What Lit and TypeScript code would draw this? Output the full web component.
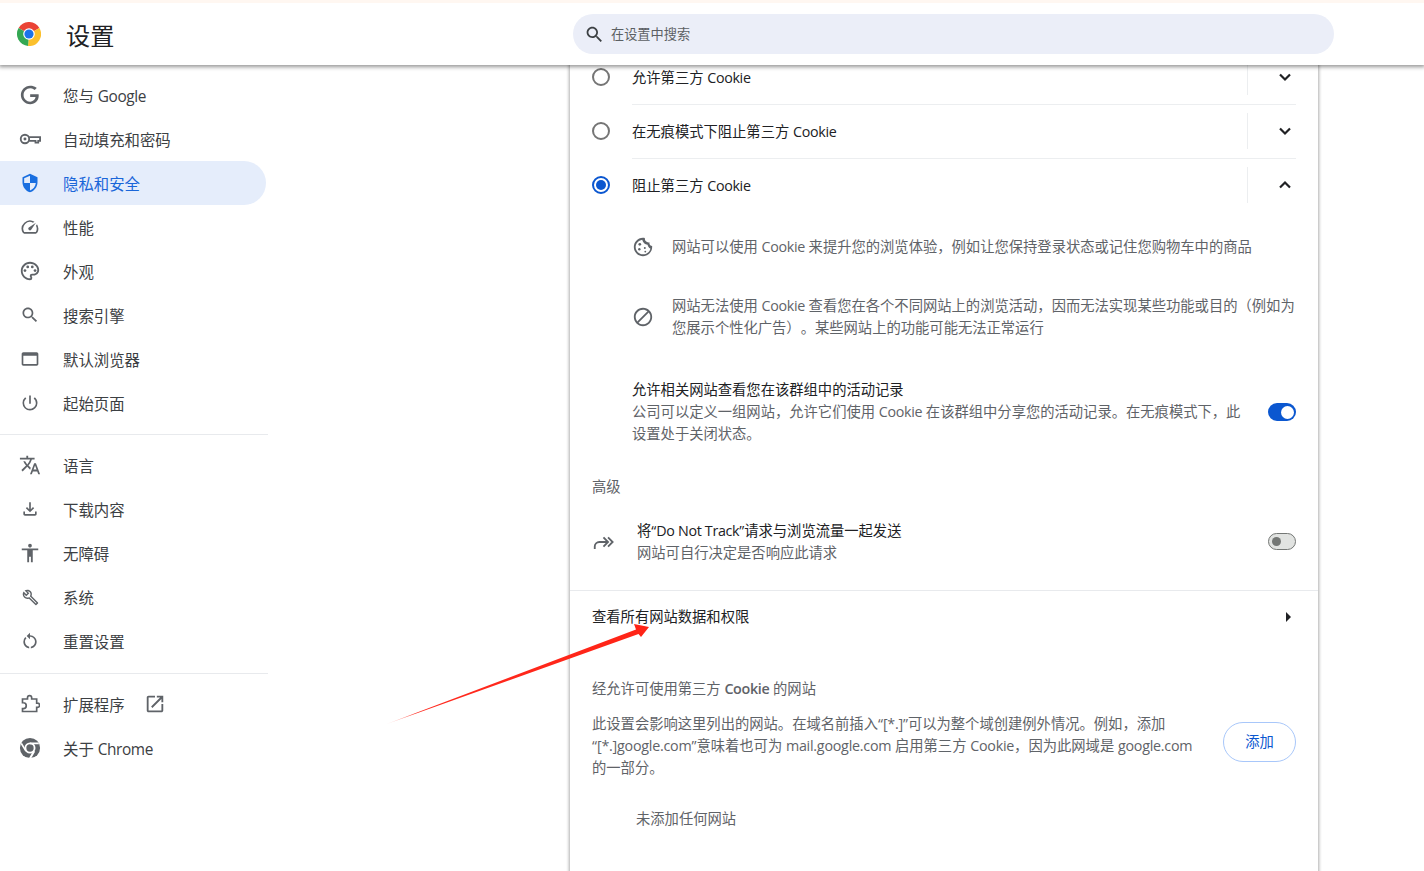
import { LitElement, html, css, svg } from "lit";
import { customElement } from "lit/decorators.js";

const P = (d: string) => svg`<path d=${d}></path>`;
const icons: Record<string, unknown> = {
  google: P("M21.35 11.1h-9.17v3.2h5.9c-.5 3-3 5-5.9 5C8.36 19.3 5 16.25 5 12c0-4.1 3.2-7.3 7.2-7.3 3.09 0 4.9 1.97 4.9 1.97L19.3 4.4S16.56 2 12.1 2C6.42 2 2.03 6.8 2.03 12c0 5.05 4.13 10 10.22 10 5.35 0 9.25-3.67 9.25-9.09 0-1.15-.15-1.81-.15-1.81z"),
  key: svg`<g class="line"><circle cx="6.5" cy="12" r="4.6"></circle><path d="M11 10h12v4h-2v2h-3v-2h-7"></path></g><circle cx="6.5" cy="12" r="1.6"></circle>`,
  shield: P("M12 1L3 5v6c0 5.55 3.84 10.74 9 12 5.16-1.26 9-6.45 9-12V5l-9-4zm0 10.99h7c-.53 4.12-3.28 7.79-7 8.94V12H5V6.3l7-3.11v8.8z"),
  speed: P("M20.38 8.57l-1.23 1.85a8 8 0 0 1-.22 7.58H5.07A8 8 0 0 1 15.58 6.85l1.85-1.23A10 10 0 0 0 3.35 19a2 2 0 0 0 1.72 1h13.85a2 2 0 0 0 1.74-1 10 10 0 0 0-.27-10.44zm-9.79 6.84a2 2 0 0 0 2.83 0l5.66-8.49-8.49 5.66a2 2 0 0 0 0 2.83z"),
  palette: svg`${P("M12 22C6.49 22 2 17.51 2 12S6.49 2 12 2s10 4.04 10 9c0 3.31-2.69 6-6 6h-1.77c-.28 0-.5.22-.5.5 0 .12.05.23.13.33.41.47.64 1.06.64 1.67A2.5 2.5 0 0 1 12 22zm0-18c-4.41 0-8 3.59-8 8s3.59 8 8 8c.28 0 .5-.22.5-.5a.54.54 0 0 0-.14-.35c-.41-.46-.63-1.05-.63-1.65a2.5 2.5 0 0 1 2.5-2.5H16c2.21 0 4-1.79 4-4 0-3.86-3.59-7-8-7z")}<circle cx="6.5" cy="11.5" r="1.5"></circle><circle cx="9.5" cy="7.5" r="1.5"></circle><circle cx="14.5" cy="7.5" r="1.5"></circle><circle cx="17.5" cy="11.5" r="1.5"></circle>`,
  search: P("M15.5 14h-.79l-.28-.27C15.41 12.59 16 11.11 16 9.5 16 5.91 13.09 3 9.5 3S3 5.91 3 9.5 5.91 16 9.5 16c1.61 0 3.09-.59 4.23-1.57l.27.28v.79l5 4.99L20.49 19l-4.99-5zm-6 0C7.01 14 5 11.99 5 9.5S7.01 5 9.5 5 14 7.01 14 9.5 11.99 14 9.5 14z"),
  web: P("M20 4H4c-1.1 0-2 .9-2 2v12c0 1.1.9 2 2 2h16c1.1 0 2-.9 2-2V6c0-1.1-.9-2-2-2zm0 14H4V8h16v10z"),
  power: P("M13 3h-2v10h2V3zm4.83 2.17l-1.42 1.42A6.92 6.92 0 0 1 19 12c0 3.87-3.13 7-7 7A6.995 6.995 0 0 1 7.58 6.58L6.17 5.17A8.932 8.932 0 0 0 3 12a9 9 0 0 0 18 0c0-2.74-1.23-5.18-3.17-6.83z"),
  translate: P("M12.87 15.07l-2.54-2.51.03-.03A17.52 17.52 0 0 0 14.07 6H17V4h-7V2H8v2H1v1.99h11.17C11.5 7.92 10.44 9.75 9 11.35 8.07 10.32 7.3 9.19 6.69 8h-2c.73 1.63 1.73 3.17 2.98 4.56l-5.09 5.02L4 19l5-5 3.11 3.11.76-2.04zM18.5 10h-2L12 22h2l1.12-3h4.75L21 22h2l-4.5-12zm-2.62 7l1.62-4.33L19.12 17h-3.24z"),
  download: P("M18 15v3H6v-3H4v3c0 1.1.9 2 2 2h12c1.1 0 2-.9 2-2v-3h-2zm-1-4l-1.41-1.41L13 12.17V4h-2v8.17L8.41 9.59 7 11l5 5 5-5z"),
  access: P("M12 2c1.1 0 2 .9 2 2s-.9 2-2 2-2-.9-2-2 .9-2 2-2zm9 7h-6v13h-2v-6h-2v6H9V9H3V7h18v2z"),
  wrench: P("M22.61 18.99l-9.08-9.08c.93-2.34.45-5.1-1.44-7C9.79.61 6.21.4 3.66 2.25L7.5 6.1 6.08 7.51 2.25 3.69C.4 6.23.61 9.82 2.91 12.11c1.86 1.86 4.57 2.35 6.89 1.48l9.11 9.11c.39.39 1.02.39 1.41 0l2.3-2.3c.4-.38.4-1.01-.01-1.41zm-3 1.6l-9.46-9.46c-.61.45-1.29.72-2 .82-1.36.2-2.79-.21-3.83-1.25C3.37 9.76 2.93 8.5 3 7.26l3.09 3.09 4.24-4.24-3.09-3.09c1.24-.07 2.49.37 3.44 1.31a4.469 4.469 0 0 1 1.24 3.96 4.35 4.35 0 0 1-.88 1.96l9.45 9.45-.88.89z"),
  restore: P("M12 5V2L8 6l4 4V7c3.31 0 6 2.69 6 6 0 2.97-2.17 5.43-5 5.91v2.02c3.95-.49 7-3.85 7-7.93 0-4.42-3.58-8-8-8zm-6 8c0-1.65.67-3.15 1.76-4.24L6.34 7.34A8.014 8.014 0 0 0 4 13c0 4.08 3.05 7.44 7 7.93v-2.02c-2.83-.48-5-2.94-5-5.91z"),
  puzzle: svg`<g class="line"><path d="M3 6h6V4.5a2.5 2.5 0 0 1 5 0V6h6v5h1a2.5 2.5 0 0 1 0 5h-1v5H3v-3.500h1a3 3 0 0 0 0-7H3z"></path></g>`,
  chrome: svg`<circle cx="12" cy="12" r="11"></circle><circle cx="12" cy="12" r="6" fill="#fff"></circle><circle cx="12" cy="12" r="4"></circle><path d="M12 7.800H22L21 6 12 6zM8 14.500 3 6 2 8 7 16zM15.800 14.500 11 23h2.500l4-7z" fill="#fff"></path>`,
  open: P("M19 19H5V5h7V3H5c-1.11 0-2 .9-2 2v14c0 1.1.89 2 2 2h14c1.1 0 2-.9 2-2v-7h-2v7zM14 3v2h3.59l-9.83 9.83 1.41 1.41L19 6.41V10h2V3h-7z"),
  cookie: svg`${P("M21.95 10.99c-1.79-.03-3.7-1.95-2.68-4.22-2.97 1-5.78-1.59-5.19-4.56C7.11.74 2 6.41 2 12c0 5.52 4.48 10 10 10 5.89 0 10.54-5.08 9.95-11.010zM12 20c-4.41 0-8-3.59-8-8 0-3.31 2.73-7.12 7.12-7.94.64 2.92 2.96 5.14 5.87 5.36.37 1.87 1.500 3.45 3.010 4.2C19.640 17.080 16.420 20 12 20z")}<circle cx="8.500" cy="9" r="1.500"></circle><circle cx="8" cy="14.500" r="1.300"></circle><circle cx="14" cy="13" r="1.100"></circle><circle cx="14.500" cy="17" r="1"></circle>`,
  ban: P("M12 2C6.48 2 2 6.48 2 12s4.48 10 10 10 10-4.48 10-10S17.52 2 12 2zM4 12c0-4.42 3.58-8 8-8 1.85 0 3.55.63 4.9 1.69L5.69 16.9A7.902 7.902 0 0 1 4 12zm8 8c-1.85 0-3.55-.63-4.9-1.69L18.31 7.1A7.902 7.902 0 0 1 20 12c0 4.42-3.58 8-8 8z"),
  dnt: svg`<g class="line"><path d="M3 19.500V17a5 5 0 0 1 5-5h9"></path><path d="M12.500 7l5 5-5 5"></path><path d="M17.500 7l5 5-5 5"></path></g>`,
};

const icon = (name: string, cls = "") => html`<svg class="ic ${cls}" viewBox="0 0 24 24" aria-hidden="true">${icons[name]}</svg>`;

/** Latin runs are set in a tightened span so they keep the reference's narrower widths. */
const t = (s: string) =>
  s.split(/([A-Za-z0-9.:*\[\]]+(?: [A-Za-z0-9.:*\[\]]+)*)/).map((part, i) => (i % 2 ? html`<span class="en">${part}</span>` : part));
const lines = (ls: string[]) => ls.map(l => html`<div class="ln">${t(l)}</div>`);

const groups: { icon: string; size?: string; label: string; active?: boolean; ext?: boolean }[][] = [
  [
    { icon: "google", size: "big", label: "您与 Google" },
    { icon: "key", size: "big", label: "自动填充和密码" },
    { icon: "shield", label: "隐私和安全", active: true },
    { icon: "speed", label: "性能" },
    { icon: "palette", size: "big", label: "外观" },
    { icon: "search", label: "搜索引擎" },
    { icon: "web", label: "默认浏览器" },
    { icon: "power", label: "起始页面" },
  ],
  [
    { icon: "translate", size: "big", label: "语言" },
    { icon: "download", label: "下载内容" },
    { icon: "access", size: "big", label: "无障碍" },
    { icon: "wrench", size: "small", label: "系统" },
    { icon: "restore", label: "重置设置" },
  ],
  [
    { icon: "puzzle", label: "扩展程序", ext: true },
    { icon: "chrome", size: "big", label: "关于 Chrome" },
  ],
];

const radios = [
  { label: "允许第三方 Cookie", checked: false },
  { label: "在无痕模式下阻止第三方 Cookie", checked: false },
  { label: "阻止第三方 Cookie", checked: true },
];

@customElement("app-root")
export class AppRoot extends LitElement {
  static styles = css`
    :host {
      display: block;
      position: relative;
      width: 1424px;
      height: 871px;
      overflow: hidden;
      background: #fff;
      font-family: "Open Sans", "Noto Sans CJK SC", sans-serif;
      color: #202124;
      text-spacing-trim: space-all;
    }
    .en { letter-spacing: -.33px; }
    .ln { white-space: nowrap; }
    .ic { display: block; width: 24px; height: 24px; fill: #5f6368; flex: none; }
    .ic .line, .line { fill: none; stroke: #5f6368; stroke-width: 2; }

    .top { position: relative; z-index: 3; background: #fff; box-shadow: 0 1px 4px 1px rgba(0,0,0,.42); }
    .strip { height: 3px; background: #fff7f1; }
    .bar { height: 62px; display: flex; align-items: center; }
    .brand { width: 573px; display: flex; align-items: center; padding-left: 17px; box-sizing: border-box; flex: none; }
    .logo { width: 24px; height: 24px; display: block; }
    .title { margin: 3px 0 0 25px; font-size: 24.2px; line-height: 32px; color: #202124; }
    .search {
      width: 761px; height: 40px; border-radius: 20px; background: #ebeef8;
      display: flex; align-items: center; padding-left: 11px; box-sizing: border-box;
      font-size: 13.2px; color: #5b5f63;
    }
    .search .ic { width: 21px; height: 21px; fill: #3c4043; margin-right: 6px; }
    .search span { margin-top: -2px; }

    .page { display: flex; align-items: flex-start; height: 806px; }
    .side { width: 268px; flex: none; padding-top: 8px; }
    .group + .group { border-top: 1px solid #e8eaed; margin-top: 9px; padding-top: 8px; }
    .group:last-child { margin-top: 10px; }
    .item {
      height: 44px; width: 266px; display: flex; align-items: center; padding-left: 20px; box-sizing: border-box;
      font-size: 15.4px; color: #3c4043; border-radius: 0 22px 22px 0;
    }
    .item .en { font-weight: 500; letter-spacing: -.4px; }
    .item .ic { width: 20px; height: 20px; margin-right: 23px; }
    .item .ic.big { width: 22px; height: 22px; margin: 0 22px 0 -1px; }
    .item .ic.small { width: 17px; height: 17px; margin: 0 24.500px 0 1.500px; }
    .item.active { background: #e5edfb; color: #1a66d9; }
    .item.active .ic { fill: #1a6fe0; }
    .item .ic.ext { width: 22px; height: 22px; margin: 0 0 0 19px; }

    .card {
      width: 748px; margin: -14px 0 0 302px; box-sizing: border-box; height: 900px; flex: none;
      background: #fff; box-shadow: 0 0 3px 1px rgba(0,0,0,.32);
      font-size: 14.3px; line-height: 22px; color: #5f6368;
    }
    .radio-list { padding: 0 22px; }
    .radio-row { height: 53px; display: flex; align-items: center; margin-bottom: 1px; }
    .radio-row:last-child { margin-bottom: 0; }
    .radio {
      width: 18px; height: 18px; box-sizing: border-box; border: 2px solid #757575; border-radius: 50%;
      margin: -1px 22px 0 0; flex: none; display: flex; align-items: center; justify-content: center;
    }
    .radio.on { border-color: #0b57d0; }
    .radio.on::after { content: ""; width: 10px; height: 10px; border-radius: 50%; background: #0b57d0; }
    .rbody {
      flex: 1; height: 100%; display: flex; align-items: center; color: #202124;
      box-shadow: 0 1px 0 #eceef0;
    }
    .radio-row:last-child .rbody { box-shadow: none; }
    .rlabel { flex: 1; }
    .rsep { width: 1px; height: 36px; background: #eceef0; margin-top: -1px; }
    .chev { width: 48px; display: flex; justify-content: flex-end; padding-right: 3px; box-sizing: border-box; margin-top: -1px; }
    .chev svg { width: 16px; height: 16px; fill: none; stroke: #202124; stroke-width: 2.200; display: block; }

    .bullet { height: 70px; display: flex; align-items: center; padding: 0 22px 0 62px; }
    .bullet .ic { width: 22px; height: 22px; margin-right: 18px; }
    .related { margin: 27px 22px 0; padding-left: 40px; display: flex; align-items: center; }
    .related .txt { flex: 1; padding-right: 26px; }
    .strong { color: #202124; }
    .toggle {
      width: 28px; height: 18px; border-radius: 9px; background: #0b57d0; flex: none;
      display: flex; align-items: center; justify-content: flex-end; padding-right: 2px; box-sizing: border-box;
    }
    .toggle::after { content: ""; width: 13px; height: 13px; border-radius: 50%; background: #fff; }
    .toggle.off {
      height: 17px; margin-top: -2px; background: #e1e3e1; border: 1px solid #747775; justify-content: flex-start; padding: 0 0 0 3px;
    }
    .toggle.off::after { width: 9px; height: 9px; background: #747775; }
    .head { margin: 31px 22px 0; }
    .dnt { margin: 22px 22px 0; display: flex; align-items: center; padding-bottom: 26px; }
    .dnt .ic { width: 22px; height: 22px; margin-right: 23px; }
    .dnt .txt { flex: 1; }
    .link {
      height: 52px; border-top: 1px solid #e8eaed; padding: 0 22px; display: flex; align-items: center;
      justify-content: space-between; color: #202124;
    }
    .tri { width: 0; height: 0; border-left: 5px solid #202124; border-top: 5px solid transparent; border-bottom: 5px solid transparent; margin-right: 5px; }
    .sub { margin: 35px 22px 0; }
    .sub .en { font-weight: 600; }
    .para { margin: 13px 22px 0; display: flex; align-items: center; }
    .para .txt { flex: 1; padding-right: 26px; }
    .para .en { letter-spacing: -.24px; }
    .add {
      width: 73px; height: 40px; border: 1px solid #a8c7fa; border-radius: 20px; box-sizing: border-box;
      display: flex; align-items: center; justify-content: center; color: #0b57d0; font-size: 14.3px; flex: none; margin-top: -8px;
    }
    .none { margin: 29px 22px 0 66px; }

    .arrow { position: absolute; left: 0; top: 0; width: 1424px; height: 871px; z-index: 2; pointer-events: none; }
  `;

  render() {
    return html`
      <div lang="zh-CN">
      <div class="top">
        <div class="strip"></div>
        <div class="bar">
          <div class="brand">
            <svg class="logo" viewBox="0 0 24 24" aria-hidden="true">
              <path d="M12 12 1.600 6A12 12 0 0 1 22.400 6Z" fill="#ea4335"></path>
              <path d="M12 12 22.400 6A12 12 0 0 1 11 24Z" fill="#fbc02d"></path>
              <path d="M12 12 11 24A12 12 0 0 1 1.600 6Z" fill="#34a853"></path>
              <circle cx="12" cy="12" r="5.800" fill="#fff"></circle>
              <circle cx="12" cy="12" r="4.600" fill="#1a73e8"></circle>
            </svg>
            <div class="title">设置</div>
          </div>
          <div class="search">${icon("search")}<span>在设置中搜索</span></div>
        </div>
      </div>
      <div class="page">
        <nav class="side">
          ${groups.map(g => html`<div class="group">
            ${g.map(it => html`<div class="item ${it.active ? "active" : ""}">
              ${icon(it.icon, it.size ?? "")}<span>${t(it.label)}</span>
              ${it.ext ? icon("open", "ext") : ""}
            </div>`)}
          </div>`)}
        </nav>
        <main class="card">
          <div class="radio-list">
            ${radios.map(r => html`<div class="radio-row">
              <span class="radio ${r.checked ? "on" : ""}"></span>
              <div class="rbody">
                <span class="rlabel">${t(r.label)}</span>
                <span class="rsep"></span>
                <span class="chev"><svg viewBox="0 0 16 16" aria-hidden="true"><path d=${r.checked ? "M3 10.500 8 5.500l5 5" : "M3 5.500l5 5 5-5"}></path></svg></span>
              </div>
            </div>`)}
          </div>
          <div class="bullet">${icon("cookie")}<div>${lines(["网站可以使用 Cookie 来提升您的浏览体验，例如让您保持登录状态或记住您购物车中的商品"])}</div></div>
          <div class="bullet">${icon("ban")}<div>${lines(["网站无法使用 Cookie 查看您在各个不同网站上的浏览活动，因而无法实现某些功能或目的（例如为", "您展示个性化广告）。某些网站上的功能可能无法正常运行"])}</div></div>
          <div class="related">
            <div class="txt"><div class="strong">允许相关网站查看您在该群组中的活动记录</div>${lines(["公司可以定义一组网站，允许它们使用 Cookie 在该群组中分享您的活动记录。在无痕模式下，此", "设置处于关闭状态。"])}</div>
            <span class="toggle"></span>
          </div>
          <div class="head">高级</div>
          <div class="dnt">
            ${icon("dnt")}
            <div class="txt"><div class="strong">${t("将“Do Not Track”请求与浏览流量一起发送")}</div>网站可自行决定是否响应此请求</div>
            <span class="toggle off"></span>
          </div>
          <div class="link"><span>查看所有网站数据和权限</span><span class="tri"></span></div>
          <div class="sub">${t("经允许可使用第三方 Cookie 的网站")}</div>
          <div class="para">
            <div class="txt">${lines(["此设置会影响这里列出的网站。在域名前插入“[*.]”可以为整个域创建例外情况。例如，添加", "“[*.]google.com”意味着也可为 mail.google.com 启用第三方 Cookie，因为此网域是 google.com", "的一部分。"])}</div>
            <span class="add">添加</span>
          </div>
          <div class="none">未添加任何网站</div>
        </main>
      </div>
      </div>
      <svg class="arrow" viewBox="0 0 1424 871" aria-hidden="true">
        <defs>
          <linearGradient id="ag" gradientUnits="userSpaceOnUse" x1="384" y1="725" x2="649" y2="627">
            <stop offset="0" stop-color="#ff2a1f" stop-opacity="0"></stop>
            <stop offset=".12" stop-color="#ff2a1f"></stop>
            <stop offset="1" stop-color="#ff2416"></stop>
          </linearGradient>
        </defs>
        <polygon points="384,725 636,629.500 634,624 649,627 641,637 638.500,634" fill="url(#ag)"></polygon>
      </svg>
    `;
  }
}
